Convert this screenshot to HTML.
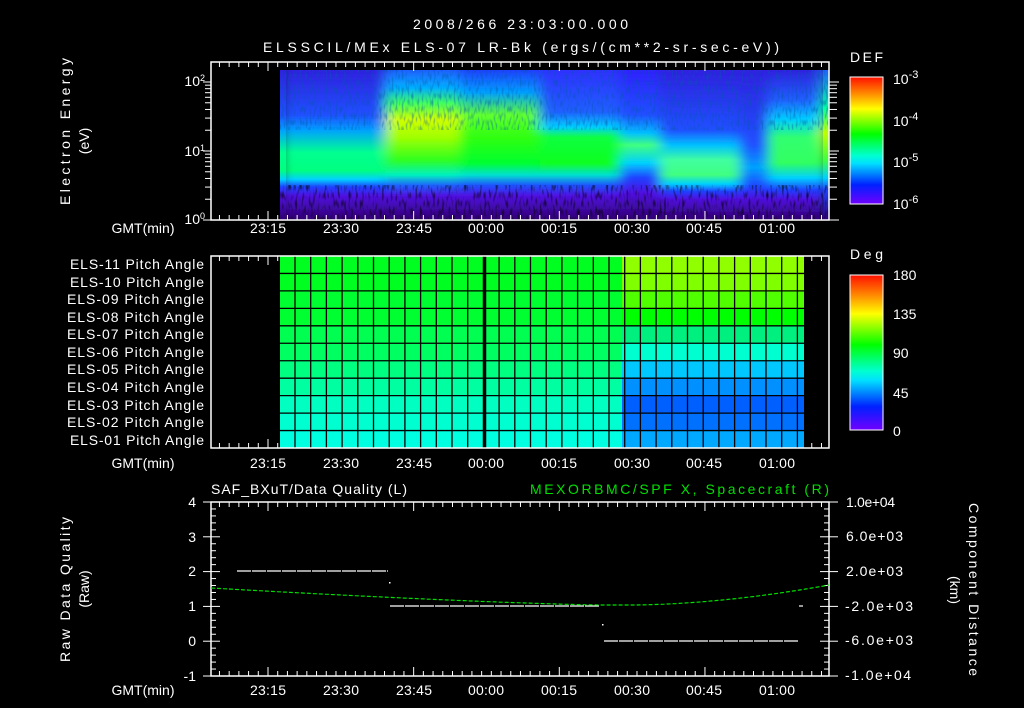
<!DOCTYPE html>
<html><head><meta charset="utf-8"><style>
html,body{margin:0;padding:0;background:#000;width:1024px;height:708px;overflow:hidden}
svg{display:block}
text{font-family:"Liberation Sans",sans-serif;fill:#fff;font-size:14px}
</style></head><body>
<svg id="s" width="1024" height="708" viewBox="0 0 1024 708" xmlns="http://www.w3.org/2000/svg">
<defs>
<linearGradient id="cb" x1="0" y1="0" x2="0" y2="1">
<stop offset="0" stop-color="#ff1000"/><stop offset="0.12" stop-color="#ff8000"/>
<stop offset="0.25" stop-color="#ffff00"/><stop offset="0.45" stop-color="#00ff00"/>
<stop offset="0.62" stop-color="#00ffd0"/><stop offset="0.68" stop-color="#00e0ff"/>
<stop offset="0.85" stop-color="#0020ff"/><stop offset="1" stop-color="#7000ff"/>
</linearGradient>
<linearGradient id="g1" gradientUnits="userSpaceOnUse" x1="0" y1="70" x2="0" y2="220">
<stop offset="0" stop-color="#3020e0"/><stop offset="0.3" stop-color="#2050ff"/><stop offset="0.4" stop-color="#00a0ff"/><stop offset="0.55" stop-color="#00ff90"/><stop offset="0.67" stop-color="#00ff80"/><stop offset="0.73" stop-color="#00d0ff"/><stop offset="0.78" stop-color="#2040ff"/><stop offset="0.84" stop-color="#5010e0"/><stop offset="1" stop-color="#300070"/></linearGradient>
<linearGradient id="g2" gradientUnits="userSpaceOnUse" x1="0" y1="70" x2="0" y2="220">
<stop offset="0" stop-color="#2060ff"/><stop offset="0.12" stop-color="#00b0ff"/><stop offset="0.22" stop-color="#40ff60"/><stop offset="0.33" stop-color="#d0ff00"/><stop offset="0.45" stop-color="#a0ff00"/><stop offset="0.6" stop-color="#30ff20"/><stop offset="0.7" stop-color="#00f0c0"/><stop offset="0.77" stop-color="#2060ff"/><stop offset="0.84" stop-color="#5010e0"/><stop offset="1" stop-color="#300070"/></linearGradient>
<linearGradient id="g3" gradientUnits="userSpaceOnUse" x1="0" y1="70" x2="0" y2="220">
<stop offset="0" stop-color="#2040ff"/><stop offset="0.15" stop-color="#00a0ff"/><stop offset="0.3" stop-color="#60ff30"/><stop offset="0.45" stop-color="#30ff10"/><stop offset="0.62" stop-color="#00ff30"/><stop offset="0.7" stop-color="#00e0d0"/><stop offset="0.77" stop-color="#2050ff"/><stop offset="0.84" stop-color="#5010e0"/><stop offset="1" stop-color="#300070"/></linearGradient>
<linearGradient id="g4" gradientUnits="userSpaceOnUse" x1="0" y1="70" x2="0" y2="220">
<stop offset="0" stop-color="#3030ff"/><stop offset="0.28" stop-color="#2060ff"/><stop offset="0.38" stop-color="#00d0ff"/><stop offset="0.45" stop-color="#10ff40"/><stop offset="0.62" stop-color="#10ff20"/><stop offset="0.7" stop-color="#00e0d0"/><stop offset="0.77" stop-color="#2050ff"/><stop offset="0.84" stop-color="#5010e0"/><stop offset="1" stop-color="#300070"/></linearGradient>
<linearGradient id="g5" gradientUnits="userSpaceOnUse" x1="0" y1="70" x2="0" y2="220">
<stop offset="0" stop-color="#3020ff"/><stop offset="0.3" stop-color="#2050ff"/><stop offset="0.42" stop-color="#00c0ff"/><stop offset="0.5" stop-color="#40ff80"/><stop offset="0.62" stop-color="#00d0ff"/><stop offset="0.72" stop-color="#2040ff"/><stop offset="0.82" stop-color="#5010e0"/><stop offset="1" stop-color="#300070"/></linearGradient>
<linearGradient id="g6" gradientUnits="userSpaceOnUse" x1="0" y1="70" x2="0" y2="220">
<stop offset="0" stop-color="#3020e0"/><stop offset="0.4" stop-color="#2050ff"/><stop offset="0.5" stop-color="#00c0ff"/><stop offset="0.6" stop-color="#40ffa0"/><stop offset="0.7" stop-color="#40ff80"/><stop offset="0.76" stop-color="#00d0ff"/><stop offset="0.81" stop-color="#2040ff"/><stop offset="0.86" stop-color="#5010e0"/><stop offset="1" stop-color="#300070"/></linearGradient>
<linearGradient id="g7" gradientUnits="userSpaceOnUse" x1="0" y1="70" x2="0" y2="220">
<stop offset="0" stop-color="#3020e0"/><stop offset="0.5" stop-color="#2050ff"/><stop offset="0.65" stop-color="#00a0ff"/><stop offset="0.78" stop-color="#2040ff"/><stop offset="0.86" stop-color="#5010e0"/><stop offset="1" stop-color="#300070"/></linearGradient>
<linearGradient id="g8" gradientUnits="userSpaceOnUse" x1="0" y1="70" x2="0" y2="220">
<stop offset="0" stop-color="#3020e0"/><stop offset="0.2" stop-color="#2060ff"/><stop offset="0.33" stop-color="#00d0ff"/><stop offset="0.45" stop-color="#30ff70"/><stop offset="0.62" stop-color="#30ff60"/><stop offset="0.72" stop-color="#00d0ff"/><stop offset="0.8" stop-color="#2040ff"/><stop offset="0.86" stop-color="#5010e0"/><stop offset="1" stop-color="#300070"/></linearGradient>
<linearGradient id="g9" gradientUnits="userSpaceOnUse" x1="0" y1="70" x2="0" y2="220">
<stop offset="0" stop-color="#2060ff"/><stop offset="0.25" stop-color="#00ffa0"/><stop offset="0.42" stop-color="#c0ff00"/><stop offset="0.6" stop-color="#40ff40"/><stop offset="0.72" stop-color="#00d0ff"/><stop offset="0.8" stop-color="#2040ff"/><stop offset="1" stop-color="#300070"/></linearGradient>
<filter id="nz" x="0" y="0" width="1" height="1">
<feTurbulence type="fractalNoise" baseFrequency="0.45 0.12" numOctaves="1" seed="3" result="t"/>
<feColorMatrix in="t" type="matrix" values="0 0 0 0 0  0 0 0 0 0  0 0 0 0 0  0 0 0 -2.2 1.1" result="m"/>
<feComposite in="m" in2="SourceGraphic" operator="in"/>
</filter>
<filter id="nz2" x="0" y="0" width="1" height="1">
<feTurbulence type="fractalNoise" baseFrequency="0.5 0.15" numOctaves="1" seed="7" result="t"/>
<feColorMatrix in="t" type="matrix" values="0 0 0 0 0  0 0 0 0 0.1  0 0 0 0 0.4  0 0 0 -3 1.6" result="m"/>
<feComposite in="m" in2="SourceGraphic" operator="in"/>
</filter>
<filter id="bl" x="0" y="0" width="1" height="1"><feGaussianBlur stdDeviation="6 0"/></filter>
</defs>

<text x="413" y="29" font-size="16" textLength="215">2008/266 23:03:00.000</text>
<text x="263" y="52" font-size="16" textLength="516">ELSSCIL/MEx ELS-07 LR-Bk  (ergs/(cm**2-sr-sec-eV))</text>

<g id="spec">
<g filter="url(#bl)">
<rect x="280" y="70" width="105" height="150" fill="url(#g1)"/>
<rect x="385" y="70" width="75" height="150" fill="url(#g2)"/>
<rect x="460" y="70" width="80" height="150" fill="url(#g3)"/>
<rect x="540" y="70" width="80" height="150" fill="url(#g4)"/>
<rect x="620" y="70" width="40" height="150" fill="url(#g5)"/>
<rect x="660" y="70" width="80" height="150" fill="url(#g6)"/>
<rect x="740" y="70" width="28" height="150" fill="url(#g7)"/>
<rect x="768" y="70" width="52" height="150" fill="url(#g8)"/>
<rect x="820" y="70" width="9" height="150" fill="url(#g9)"/>
</g>
<rect x="280" y="70" width="6" height="150" fill="url(#g1)"/>
<rect x="823" y="70" width="6" height="150" fill="url(#g9)"/>
<rect x="280" y="70" width="549" height="60" fill="#000" filter="url(#nz2)" opacity="0.5"/>
<rect x="280" y="185" width="549" height="35" fill="#000" filter="url(#nz)"/>
</g>
<rect x="211" y="62" width="618" height="158" fill="none" stroke="#fff" stroke-width="1.5"/>
<g id="ticks"></g>

<text x="205" y="86" text-anchor="end">10<tspan dy="-5" font-size="9">2</tspan></text>
<text x="205" y="156" text-anchor="end">10<tspan dy="-5" font-size="9">1</tspan></text>
<text x="205" y="224" text-anchor="end">10<tspan dy="-5" font-size="9">0</tspan></text>
<text transform="translate(70,205) rotate(-90)" textLength="147">Electron Energy</text>
<text transform="translate(89,141) rotate(-90)" text-anchor="middle">(eV)</text>

<text x="850" y="62" font-size="16" textLength="33">DEF</text>
<rect x="850" y="77" width="33" height="127" fill="url(#cb)" stroke="#fff" stroke-width="1"/>
<text x="893" y="84" font-size="16">10<tspan dy="-6" font-size="11">-3</tspan></text>
<text x="893" y="126" font-size="16">10<tspan dy="-6" font-size="11">-4</tspan></text>
<text x="893" y="167" font-size="16">10<tspan dy="-6" font-size="11">-5</tspan></text>
<text x="893" y="209" font-size="16">10<tspan dy="-6" font-size="11">-6</tspan></text>

<g id="pitch"></g>
<rect x="211" y="256" width="618" height="192" fill="none" stroke="#fff" stroke-width="1.5"/>
<g font-size="13">
<text x="70" y="269" textLength="134">ELS-11 Pitch Angle</text>
<text x="70" y="287" textLength="134">ELS-10 Pitch Angle</text>
<text x="67" y="304" textLength="137">ELS-09 Pitch Angle</text>
<text x="67" y="322" textLength="137">ELS-08 Pitch Angle</text>
<text x="67" y="339" textLength="137">ELS-07 Pitch Angle</text>
<text x="67" y="357" textLength="137">ELS-06 Pitch Angle</text>
<text x="67" y="374" textLength="137">ELS-05 Pitch Angle</text>
<text x="67" y="392" textLength="137">ELS-04 Pitch Angle</text>
<text x="67" y="410" textLength="137">ELS-03 Pitch Angle</text>
<text x="67" y="427" textLength="137">ELS-02 Pitch Angle</text>
<text x="70" y="445" textLength="134">ELS-01 Pitch Angle</text>
</g>
<text x="850" y="259" font-size="16" textLength="33">Deg</text>
<rect x="850" y="275" width="33" height="155" fill="url(#cb)" stroke="#fff" stroke-width="1"/>
<text x="893" y="280" font-size="16">180</text>
<text x="893" y="319" font-size="16">135</text>
<text x="893" y="358" font-size="16">90</text>
<text x="893" y="398" font-size="16">45</text>
<text x="893" y="436" font-size="16">0</text>

<text x="211" y="494" font-size="16" textLength="196">SAF_BXuT/Data Quality (L)</text>
<text x="530" y="494" font-size="16" textLength="299" style="fill:#00e000">MEXORBMC/SPF X, Spacecraft (R)</text>
<rect x="211" y="502" width="618" height="174" fill="none" stroke="#fff" stroke-width="1.5"/>
<g id="bot"></g>
<text x="196" y="507" text-anchor="end">4</text>
<text x="196" y="542" text-anchor="end">3</text>
<text x="196" y="576" text-anchor="end">2</text>
<text x="196" y="611" text-anchor="end">1</text>
<text x="196" y="646" text-anchor="end">0</text>
<text x="196" y="681" text-anchor="end">-1</text>
<text transform="translate(70,662) rotate(-90)" textLength="145">Raw Data Quality</text>
<text transform="translate(89,589) rotate(-90)" text-anchor="middle">(Raw)</text>
<g font-size="13">
<text x="846" y="507" textLength="49">1.0e+04</text>
<text x="846" y="541" textLength="57">6.0e+03</text>
<text x="846" y="576" textLength="57">2.0e+03</text>
<text x="845" y="611" textLength="68">-2.0e+03</text>
<text x="845" y="645" textLength="68">-6.0e+03</text>
<text x="845" y="680" textLength="66">-1.0e+04</text>
</g>
<text transform="translate(969,503) rotate(90)" textLength="173">Component Distance</text>
<text transform="translate(950,590) rotate(90)" text-anchor="middle">(km)</text>

<g id="tl"></g>
</svg>
<script>
var NS="http://www.w3.org/2000/svg";
function el(p,t,a){var e=document.createElementNS(NS,t);for(var k in a)e.setAttribute(k,a[k]);document.getElementById(p).appendChild(e);return e;}
var labs=["23:15","23:30","23:45","00:00","00:15","00:30","00:45","01:00"];
var px=[268,341,414,486,559,632,704,777];
[228,463,690].forEach(function(r){
  var t=el("tl","text",{x:143,y:r+5,"text-anchor":"middle","font-size":"12.5"});t.textContent="GMT(min)";
  labs.forEach(function(l,i){var t=el("tl","text",{x:px[i]-18,y:r+5,textLength:36});t.textContent=l;});
});
var left=["#00ff20","#00ff20","#00ff30","#00ff30","#00ff50","#00ff60","#00ff80","#00ffa0","#00ffc0","#00ffd0","#00ffe0"];
var right=["#90ff00","#80ff00","#50ff00","#00ff00","#00f080","#00ffd0","#00c8ff","#0090ff","#0060ff","#0070ff","#00a8ff"];
var rh=192/11;
for(var i=0;i<11;i++){var y=256+i*rh;
 el("pitch","rect",{x:280,y:y,width:342,height:rh+0.5,fill:left[i]});
 el("pitch","rect",{x:622,y:y,width:182,height:rh+0.5,fill:right[i]});
 if(i>0)el("pitch","line",{x1:280,x2:804,y1:y,y2:y,stroke:"#000","stroke-width":1.3});}
for(var x=295;x<804;x+=15.7)el("pitch","line",{x1:x,x2:x,y1:256,y2:448,stroke:"#000","stroke-width":1.3});
el("pitch","line",{x1:485,x2:485,y1:256,y2:448,stroke:"#000","stroke-width":2.5});
[[62,220],[256,448],[502,676]].forEach(function(b){
 for(var x=268-9.71*6;x<829;x+=9.71){if(x<212)continue;
  var maj=px.some(function(p){return Math.abs(p-x)<1;});var L=maj?9:5;
  el("ticks","line",{x1:x,x2:x,y1:b[0],y2:b[0]+L,stroke:"#fff"});
  el("ticks","line",{x1:x,x2:x,y1:b[1],y2:b[1]-L,stroke:"#fff"});}
});
function ly(v){return 220-(Math.log10(v))*69;}
[1,2,3,4,5,6,7,8,9,10,20,30,40,50,60,70,80,90,100,200].forEach(function(v){var y=ly(v);if(y<62)return;
 var maj=(v==1||v==10||v==100);
 el("ticks","line",{x1:211,x2:maj?203:205,y1:y,y2:y,stroke:"#fff"});
 el("ticks","line",{x1:829,x2:maj?839:837,y1:y,y2:y,stroke:"#fff"});});
for(var k=0;k<12;k++){var y=77+k*127/12;el("ticks","line",{x1:883,x2:877,y1:y,y2:y,stroke:"#fff"});}
for(var k=0;k<20;k++){var y=275+k*155/20;el("ticks","line",{x1:883,x2:877,y1:y,y2:y,stroke:"#fff"});}
for(var k=0;k<=25;k++){var y=502+k*174/25;var L=(k%5==0)?9:5;
 el("bot","line",{x1:211,x2:211+L,y1:y,y2:y,stroke:"#fff"});el("bot","line",{x1:829,x2:829-L,y1:y,y2:y,stroke:"#fff"});
 if(k%5==0)el("bot","line",{x1:829,x2:838,y1:y,y2:y,stroke:"#fff"});}
for(var k=0;k<=5;k++){var y=502+k*34.8;el("bot","line",{x1:211,x2:203,y1:y,y2:y,stroke:"#fff"});}
var d=[[237,388,571],[390,600,606],[604,798,641],[799,803,606]];
d.forEach(function(s){el("bot","line",{x1:s[0],x2:s[1],y1:s[2],y2:s[2],stroke:"#fff","stroke-width":1.2,"stroke-dasharray":"14 1"});});
el("bot","rect",{x:389,y:582,width:1.5,height:1.5,fill:"#fff"});
el("bot","rect",{x:602,y:624,width:1.5,height:1.5,fill:"#fff"});
var pts="";for(var x=211;x<=829;x+=3){var y;if(x<600)y=605-17*Math.pow((600-x)/389,1.3);else if(x<630)y=605;else y=605-20*Math.pow((x-630)/199,1.8);pts+=x+","+y.toFixed(1)+" ";}
el("bot","polyline",{points:pts,fill:"none",stroke:"#00e000","stroke-width":1.2,"stroke-dasharray":"4 2"});
</script>
</body></html>
